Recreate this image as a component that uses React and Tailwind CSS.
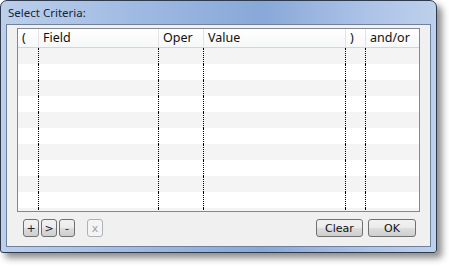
const COLS = [
  { label: '(', w: 'w-[21px]' },
  { label: 'Field', w: 'w-[120px]' },
  { label: 'Oper', w: 'w-[45px]' },
  { label: 'Value', w: 'w-[142px]' },
  { label: ')', w: 'w-[20px]' },
  { label: 'and/or', w: 'flex-1' },
]

const ROWS = Array.from({ length: 11 }, (_, i) => i)

export default function App() {
  return (
    <div className="w-[449px] h-[268px] bg-white font-['Noto_Sans','Open_Sans',sans-serif]">
      <div className="w-[437px] h-[253px] rounded-t-[7px] rounded-b-[3px] border border-[#2f3a4c] bg-[linear-gradient(90deg,#bccfeb_0%,#a0bbe2_30%,#88a8d8_60%,#aec4e7_85%,#bdd0ec_100%)] shadow-[5px_5px_7px_rgba(0,0,0,0.45)] flex flex-col">
        <div className="h-[23px] shrink-0 pl-[7px] flex items-center text-[11.5px] text-[#16243a]">
          Select Criteria:
        </div>
        <div className="flex-1 mx-[5px] mb-[5px] border border-[#6f819c] bg-[#f0f0f0] flex flex-col pt-[3px] px-[10px]">
          <div className="h-[184px] border border-[#828790] bg-white overflow-hidden flex flex-col">
            <div className="h-[19px] shrink-0 flex border-b border-[#d5d5d5] bg-[linear-gradient(#ffffff,#f6f7f8)]">
              {COLS.map((c, i) => (
                <div
                  key={c.label}
                  className={`${c.w} shrink-0 pl-[4px] flex items-center text-[12.5px] text-[#111] ${
                    i < COLS.length - 1 ? 'border-r border-[#e3e3e3]' : ''
                  }`}
                >
                  {c.label}
                </div>
              ))}
            </div>
            {ROWS.map((r) => (
              <div key={r} className={`h-[16px] shrink-0 flex ${r % 2 === 0 ? 'bg-[#f4f4f4]' : 'bg-white'}`}>
                {COLS.map((c, i) => (
                  <div
                    key={c.label}
                    className={`${c.w} shrink-0 ${i < COLS.length - 1 ? 'border-r border-dotted border-black' : ''}`}
                  />
                ))}
              </div>
            ))}
          </div>
          <div className="mt-[7px] flex items-center pl-[6px] pr-[4px] font-['DejaVu_Sans',sans-serif] text-[11px]">
            <SmallBtn>+</SmallBtn>
            <SmallBtn className="ml-[2px]">&gt;</SmallBtn>
            <SmallBtn className="ml-[2px]">-</SmallBtn>
            <SmallBtn className="ml-[12px]" disabled>x</SmallBtn>
            <div className="flex-1" />
            <button className="w-[47px] h-[18px] rounded-[3px] border border-[#707070] bg-[linear-gradient(#f2f2f2_0%,#ebebeb_50%,#dddddd_51%,#cfcfcf_100%)] text-[#111] leading-none">
              Clear
            </button>
            <button className="ml-[5px] w-[48px] h-[18px] rounded-[3px] border border-[#707070] bg-[linear-gradient(#f2f2f2_0%,#ebebeb_50%,#dddddd_51%,#cfcfcf_100%)] text-[#111] leading-none">
              OK
            </button>
          </div>
        </div>
      </div>
    </div>
  )
}

function SmallBtn({ children, className = '', disabled }) {
  return (
    <button
      className={`w-[16px] h-[18px] rounded-[3px] border flex items-center justify-center leading-none ${className} ${
        disabled
          ? 'border-[#adb2b5] bg-[#f4f4f4] text-[#a0a0a0]'
          : 'border-[#707070] bg-[linear-gradient(#f2f2f2_0%,#ebebeb_50%,#dddddd_51%,#cfcfcf_100%)] text-[#222]'
      }`}
    >
      {children}
    </button>
  )
}
